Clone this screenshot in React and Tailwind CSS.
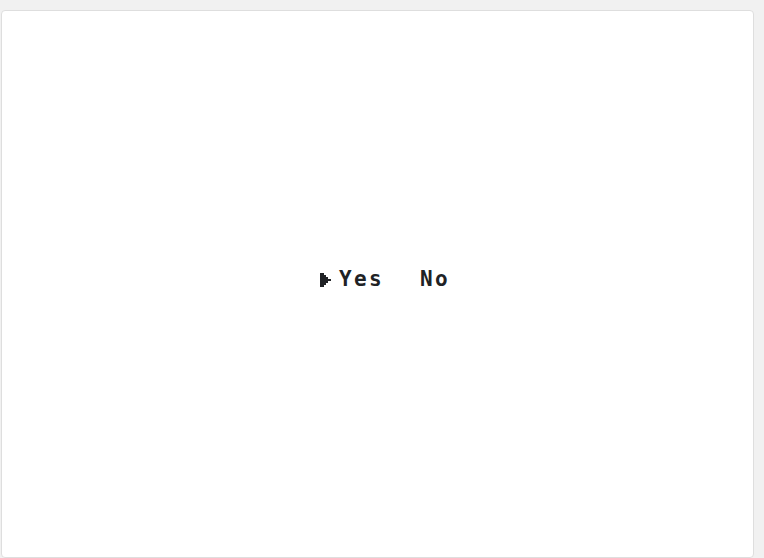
export default function App() {
  return (
    <div className="w-[764px] h-[558px] bg-[#f1f1f1] pt-[10px] pl-px pr-[10px] overflow-hidden">
      <div className="h-[548px] bg-white border border-[#dedede] rounded-[4px] flex items-center justify-center pl-[15px] pb-[9px]">
        <div
          className="flex items-center text-[#202225] font-bold text-[21px] leading-none tracking-[2.4px]"
          style={{ fontFamily: '"DejaVu Sans Mono", monospace' }}
        >
          <div className="flex items-center">
            <svg width="12" height="14" viewBox="0 0 12 14" className="mr-[7px]">
              <path d="M0 0h4v2h2v2h2v2h3v2h-3v2h-2v2h-2v2h-4z" fill="#202225" />
            </svg>
            <span>Yes</span>
          </div>
          <div className="ml-[36px]">
            <span>No</span>
          </div>
        </div>
      </div>
    </div>
  );
}
